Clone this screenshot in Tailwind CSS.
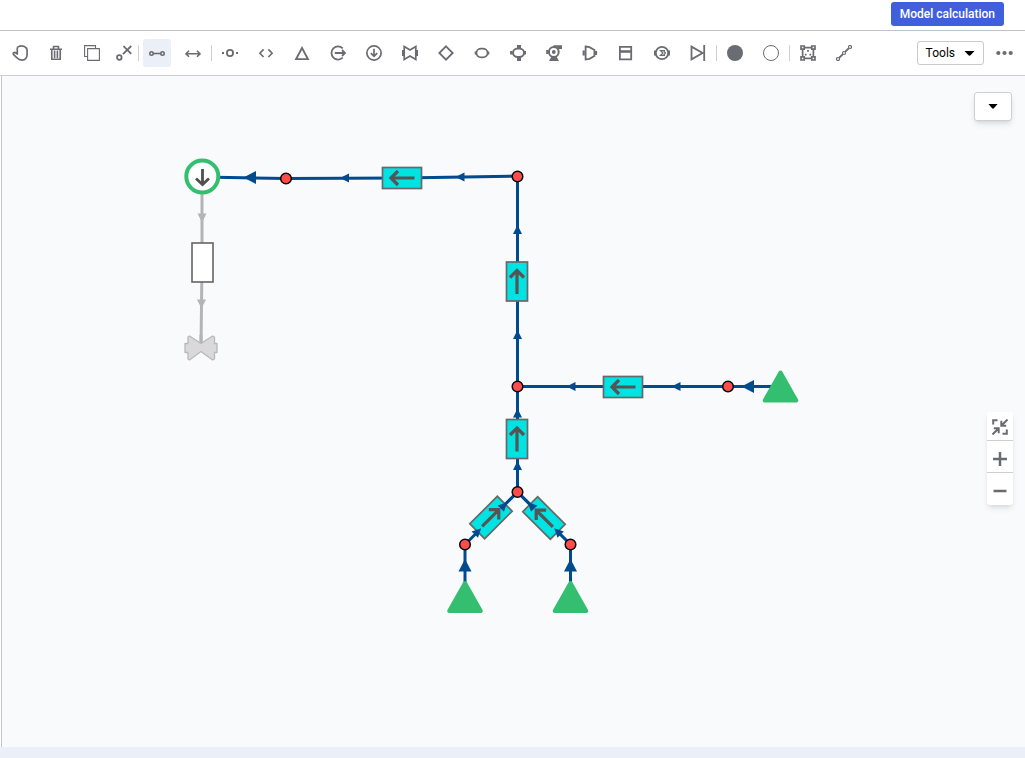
<!DOCTYPE html>
<html lang="en">
<head>
  <meta charset="UTF-8">
  <meta name="viewport" content="width=device-width, initial-scale=1.0">
  <title>Model editor</title>
  <script src="https://cdn.jsdelivr.net/npm/@tailwindcss/browser@4"></script>
</head>
<body class="flex h-screen flex-col overflow-hidden bg-white font-['Roboto',sans-serif] text-[#6b6b72]">
  <header class="flex shrink-0 justify-end border-b border-[#c0c0ca] pt-0.5 pr-[21px] pb-1">
    <button type="button" class="h-6 rounded-[3px] bg-[#3f5fdd] px-[9px] text-xs font-medium text-white">Model calculation</button>
  </header>

  <div role="toolbar" aria-label="Drawing tools" class="flex h-[45px] shrink-0 items-center border-b border-[#ceced2] pl-1.5">
    <div class="flex items-center gap-2">
      <button type="button" aria-label="Pan" class="grid size-7 place-items-center">
        <svg class="size-4" viewBox="0 0 16 16" fill="none" stroke="currentColor" stroke-width="1.7" stroke-linejoin="round" stroke-linecap="round"><path d="M5.3 9V3Q5.3 1.6 7 1.5Q8.7.6 10.3 1.2Q12.5 1 13.4 2.4Q15 3 15.1 5V9.8Q14.8 14.9 10 15.1Q7 15 5 12.8L1.4 9.4Q.8 7.6 2.6 7.3Q4 7.4 5.3 9"/></svg>
      </button>
      <button type="button" aria-label="Delete" class="grid size-7 place-items-center">
        <svg class="size-4" viewBox="0 0 16 16" fill="none" stroke="currentColor" stroke-width="1.6"><path d="M2 4.3H14M5.5 4V1.5H10.5V4M3.8 4V14.2H12.2V4M6.6 5.5V13M9.4 5.5V13"/></svg>
      </button>
      <button type="button" aria-label="Copy" class="grid size-7 place-items-center">
        <svg class="size-4" viewBox="0 0 16 16" fill="none" stroke="currentColor" stroke-width="1.1"><path d="M3.5 11.5H.6V.6H11.5V3.5M3.6 3.6H15.4V15.4H3.6Z"/></svg>
      </button>
    </div>
    <button type="button" aria-label="Disconnect" class="ml-1 grid size-7 place-items-center">
      <svg class="size-4" viewBox="0 0 16 16" fill="none" stroke="currentColor" stroke-width="1.8"><circle cx="3.3" cy="12.5" r="2.3"/><path d="M15.2 1L7 9.2M7.5 1.2L15.2 8.8"/></svg>
    </button>
    <div class="mr-1 h-4 w-px bg-[#cfcfd4]"></div>
    <div class="flex items-center gap-2">
      <button type="button" aria-label="Pipe" aria-pressed="true" class="grid size-7 place-items-center rounded-[3px] bg-[#ebeff7]">
        <svg class="size-4" viewBox="0 0 16 16" fill="none" stroke="currentColor" stroke-width="1.6"><circle cx="2.5" cy="8.5" r="1.7"/><circle cx="13.5" cy="8.5" r="1.7"/><path d="M4 8.5H12"/></svg>
      </button>
      <button type="button" aria-label="Two-way link" class="grid size-7 place-items-center">
        <svg class="size-4" viewBox="0 0 16 16" fill="none" stroke="currentColor" stroke-width="1.6"><path d="M1 8.8H15M4 5.8L1 8.8L4 11.8M12 5.8L15 8.8L12 11.8"/></svg>
      </button>
    </div>
    <div class="mx-1 h-4 w-px bg-[#cfcfd4]"></div>
    <div class="flex items-center gap-2">
      <button type="button" aria-label="Node" class="grid size-7 place-items-center">
        <svg class="size-4" viewBox="0 0 16 16" fill="none" stroke="currentColor" stroke-width="1.8"><circle cx="8" cy="8" r="3.1"/><path d="M0 8H2M14 8H16"/></svg>
      </button>
      <button type="button" aria-label="Code" class="grid size-7 place-items-center">
        <svg class="size-4" viewBox="0 0 16 16" fill="none" stroke="currentColor" stroke-width="1.6"><path d="M5.6 4.4L1.9 8.2L5.6 12M10.4 4.4L14.1 8.2L10.4 12"/></svg>
      </button>
      <button type="button" aria-label="Source" class="grid size-7 place-items-center">
        <svg class="size-4" viewBox="0 0 16 16" fill="none" stroke="currentColor" stroke-width="1.8"><path d="M8 3L14 14.2H2Z"/></svg>
      </button>
      <button type="button" aria-label="Outlet" class="grid size-7 place-items-center">
        <svg class="size-4" viewBox="0 0 16 16" fill="none" stroke="currentColor" stroke-width="1.8"><path d="M12.7 3.3A6.6 6.6 0 1 0 12.7 12.7M4.8 8H15M12 5L15 8L12 11"/></svg>
      </button>
      <button type="button" aria-label="Sink" class="grid size-7 place-items-center">
        <svg class="size-4" viewBox="0 0 16 16" fill="none" stroke="currentColor" stroke-width="1.7"><circle cx="8" cy="8" r="7.1"/><path d="M8 3.8V11.3M4.8 8.2L8 11.4L11.2 8.2"/></svg>
      </button>
      <button type="button" aria-label="Valve" class="grid size-7 place-items-center">
        <svg class="size-4" viewBox="0 0 16 16" fill="none" stroke="currentColor" stroke-width="1.7"><path d="M2.2 1.6L8 5L13.8 1.6V14.4L8 11L2.2 14.4Z"/><path d="M1 5V11M15 5V11" stroke-width="2"/></svg>
      </button>
      <button type="button" aria-label="Choke" class="grid size-7 place-items-center">
        <svg class="size-4" viewBox="0 0 16 16" fill="none" stroke="currentColor" stroke-width="1.8"><path d="M8 1.3L14.7 8L8 14.7L1.3 8Z"/></svg>
      </button>
      <button type="button" aria-label="Tank" class="grid size-7 place-items-center">
        <svg class="size-4" viewBox="0 0 16 16" fill="none" stroke="currentColor" stroke-width="1.8"><rect x="2.4" y="3.7" width="11.2" height="8.6" rx="4.8" ry="4.3"/><path d="M1.4 6.5V9.5M14.6 6.5V9.5" stroke-width="1.4"/></svg>
      </button>
      <button type="button" aria-label="Separator" class="grid size-7 place-items-center">
        <svg class="size-4" viewBox="0 0 16 16" fill="none" stroke="currentColor" stroke-width="2"><rect x="3" y="3.4" width="11" height="8.6" rx="4.8" ry="4.3"/><path d="M1.2 6V9.6M15.1 6V9.600" stroke-width="2.2"/><path d="M9 0V3M9 12V16" stroke-width="4"/></svg>
      </button>
      <button type="button" aria-label="Pump" class="grid size-7 place-items-center">
        <svg class="size-4" viewBox="0 0 16 16" fill="none" stroke="currentColor" stroke-width="2"><circle cx="7.8" cy="7" r="4.9"/><circle cx="7.800" cy="7" r="1.9" fill="currentColor" stroke="none"/><path d="M7.5 1.200H16M1.200 5V9"/><path d="M11 1H16V4H12Z" fill="currentColor" stroke="none"/><path d="M5.500 11.500H10.500L13 16H3Z" fill="currentColor" stroke="none"/></svg>
      </button>
      <button type="button" aria-label="Compressor" class="grid size-7 place-items-center">
        <svg class="size-4" viewBox="0 0 16 16" fill="none" stroke="currentColor" stroke-width="1.8"><path d="M3.600 1.500L7.500 2.200L12.400 5V11L7.500 13.800L3.600 14.500Z"/><path d="M1.700 5.500V10.500M14 6V10" stroke-width="2.200"/></svg>
      </button>
      <button type="button" aria-label="Column" class="grid size-7 place-items-center">
        <svg class="size-4" viewBox="0 0 16 16" fill="none" stroke="currentColor" stroke-width="1.8"><path d="M1.900 1.900H13.200V14.400H1.900Z"/><path d="M2 6.500H13" stroke-width="2.600"/></svg>
      </button>
      <button type="button" aria-label="Heat exchanger" class="grid size-7 place-items-center">
        <svg class="size-4" viewBox="0 0 16 16" fill="none" stroke="currentColor" stroke-width="1.8"><circle cx="8" cy="8" r="6.200"/><path d="M1 5.500V10.500M15 5.500V10.500" stroke-width="2"/><path d="M11 5.600H6.500L9 8L6.500 10.400H11M9.500 5.600L11.500 8L9.500 10.400" stroke-width="1.200"/></svg>
      </button>
      <button type="button" aria-label="Check valve" class="grid size-7 place-items-center">
        <svg class="size-4" viewBox="0 0 16 16" fill="none" stroke="currentColor" stroke-width="1.800"><path d="M1.500 1.600L12.600 8L1.500 14.400ZM14.200 0V16"/></svg>
      </button>
    </div>
    <div class="mx-1 h-4 w-px bg-[#cfcfd4]"></div>
    <div class="flex items-center gap-2">
      <button type="button" aria-label="Filled joint" class="grid size-7 place-items-center">
        <svg class="size-4" viewBox="0 0 16 16" fill="currentColor"><circle cx="8" cy="8" r="8"/></svg>
      </button>
      <button type="button" aria-label="Open joint" class="grid size-7 place-items-center">
        <svg class="size-4" viewBox="0 0 16 16" fill="none" stroke="currentColor" stroke-width="1"><circle cx="8" cy="8" r="7.5"/></svg>
      </button>
    </div>
    <div class="mx-1 h-4 w-px bg-[#cfcfd4]"></div>
    <div class="flex items-center gap-2">
      <button type="button" aria-label="Group" class="grid size-7 place-items-center">
        <svg class="size-4" viewBox="0 0 16 16" fill="none" stroke="currentColor" stroke-width="1.7"><path d="M1 1H4.200V4.200H1ZM11.800 1H15V4.200H11.800ZM1 11.800H4.200V15H1ZM11.800 11.800H15V15H11.800ZM4.200 2.600H11.800M4.200 13.400H11.800M2.600 4.200V11.800M13.400 4.200V11.800"/><path d="M7.100 5H8.900V6.800H7.100ZM4.800 8.800H6.600V10.600H4.800ZM9.400 8.800H11.200V10.600H9.400Z" fill="currentColor" stroke="none"/></svg>
      </button>
      <button type="button" aria-label="Polyline" class="grid size-7 place-items-center">
        <svg class="size-4" viewBox="0 0 16 16" fill="none" stroke="currentColor" stroke-width="1.2"><circle cx="2" cy="14" r="1.500"/><circle cx="8" cy="8" r="1.500"/><circle cx="14" cy="2" r="1.500"/><path d="M3.100 12.900L6.900 9.100M9.100 6.900L12.900 3.100" stroke-width="2"/></svg>
      </button>
    </div>
    <div class="mr-3 ml-auto flex items-center gap-3">
      <button type="button" class="flex h-6 items-center gap-[9px] rounded-[3px] border border-[#c9c9ce] px-2 text-xs text-black">
        Tools
        <svg class="h-[5px] w-[11px]" viewBox="0 0 11 6" preserveAspectRatio="none"><path d="M.5 0H10.500L6.500 5.200Q5.500 6.200 4.500 5.200Z"/></svg>
      </button>
      <button type="button" aria-label="More">
        <svg class="h-4 w-[17px]" viewBox="0 0 17 16" fill="currentColor"><circle cx="2.300" cy="8" r="2.100"/><circle cx="8.500" cy="8" r="2.100"/><circle cx="14.700" cy="8" r="2.100"/></svg>
      </button>
    </div>
  </div>

  <main class="relative ml-px flex-1 border-l border-[#c4c6ca] bg-[#f8fafc]">
    <!-- Network diagram -->
    <svg class="absolute inset-0 size-full" role="img" aria-label="Pipe network">
      <defs>
        <!-- Every shape is drawn around 0,0; arrows and pipes point up -->
        <path id="flow" d="M0-4.5L4.5 4.5H-4.5Z"/>
        <path id="flow-big" d="M0-6.5L6.5 6H-6.5Z"/>
        <g id="pipe">
          <rect x="-10.5" y="-19.5" width="21" height="39" fill="#00e3e3" stroke="#686868" stroke-width="1.7"/>
          <path d="M0 12.5V-10.5M-7-4L0-11L7-4" fill="none" stroke="#555" stroke-width="3.2"/>
        </g>
        <circle id="joint" r="5.3" fill="#ff4d4d" stroke="#080808" stroke-width="1.5"/>
        <path id="well" d="M0-14L15.8 14H-15.8Z" fill="#34be70" stroke="#34be70" stroke-width="4" stroke-linejoin="round"/>
      </defs>
      <g transform="translate(-2 -76)">
        <path d="M202 177V262L201 348" fill="none" stroke="#b3b4b6" stroke-width="3"/>
        <path d="M202 177L286 178.5L402 178L517.5 176V492L465 544.5V598M517.5 492L570.5 544.5V598M517.5 386.5H780" fill="none" stroke="#004a90" stroke-width="3"/>

        <g fill="#b3b4b6">
          <use href="#flow" transform="translate(202 218) rotate(180)"/>
          <use href="#flow" transform="translate(201.5 304) rotate(180)"/>
        </g>
        <rect x="192" y="243" width="21" height="39" fill="#fff" stroke="#656565" stroke-width="1.6"/>
        <path d="M189.5 336L201 343.5L212.5 336L214.5 337V343.5H217V352.5H214.5V359L212.5 360L201 351.5L189.5 360L188 359V352.5H185V343.5H188V337Z" fill="#d9d9db" stroke="#b9b9bb" stroke-width="1.3" stroke-linejoin="round"/>
        <path d="M201 335V343" stroke="#b3b4b6" stroke-width="3"/>

        <use href="#pipe" transform="translate(402 178) rotate(-90)"/>
        <use href="#pipe" transform="translate(517 281.5)"/>
        <use href="#pipe" transform="translate(517 439)"/>
        <use href="#pipe" transform="translate(623 387) rotate(-90)"/>
        <use href="#pipe" transform="translate(491 517.5) rotate(45)"/>
        <use href="#pipe" transform="translate(544 518) rotate(-45)"/>

        <g fill="#004a90">
          <use href="#flow-big" transform="translate(250 177.5) rotate(-90)"/>
          <use href="#flow" transform="translate(344.5 178) rotate(-90)"/>
          <use href="#flow" transform="translate(460 177) rotate(-90)"/>
          <use href="#flow" transform="translate(517.5 229.5)"/>
          <use href="#flow" transform="translate(517.5 334.5)"/>
          <use href="#flow" transform="translate(517.5 413)"/>
          <use href="#flow" transform="translate(517.5 465.5)"/>
          <use href="#flow" transform="translate(571 386.5) rotate(-90)"/>
          <use href="#flow" transform="translate(676 386.5) rotate(-90)"/>
          <use href="#flow-big" transform="translate(748 386.5) rotate(-90)"/>
          <use href="#flow" transform="translate(478 531.5) rotate(45)"/>
          <use href="#flow" transform="translate(504 505.5) rotate(45)"/>
          <use href="#flow" transform="translate(557.5 531.5) rotate(-45)"/>
          <use href="#flow" transform="translate(531 505.5) rotate(-45)"/>
          <use href="#flow-big" transform="translate(465 565.5)"/>
          <use href="#flow-big" transform="translate(570.5 565.5)"/>
        </g>
        <path d="M503 506.5L517.5 492L532 506.5" fill="none" stroke="#004a90" stroke-width="3"/>

        <use href="#joint" x="286" y="178.5"/>
        <use href="#joint" x="517.5" y="176.5"/>
        <use href="#joint" x="517.5" y="386.5"/>
        <use href="#joint" x="728" y="386.5"/>
        <use href="#joint" x="517.5" y="492"/>
        <use href="#joint" x="465" y="544.5"/>
        <use href="#joint" x="570.5" y="544.5"/>

        <use href="#well" x="780.5" y="386.5"/>
        <use href="#well" x="465" y="597"/>
        <use href="#well" x="570.5" y="597"/>

        <circle cx="202.300" cy="176.5" r="16" fill="#fff" stroke="#34be70" stroke-width="4"/>
        <path d="M202.5 169V184M196 178.5L202.5 184.5L209 178.5" fill="none" stroke="#505050" stroke-width="2.8"/>
      </g>
    </svg>

    <button type="button" aria-label="Show panel" class="absolute top-4 right-[13px] grid h-[29px] w-[38px] place-items-center rounded-[3px] border border-[#cfd0d4] bg-white shadow-md">
      <svg class="h-[5px] w-[10px]" viewBox="0 0 11 6" preserveAspectRatio="none"><path d="M.5 0H10.5L6.5 5.2Q5.5 6.2 4.5 5.2Z"/></svg>
    </button>

    <div class="absolute top-[336px] right-3 w-[26px] divide-y divide-[#cfcfd3] rounded-[3px] bg-white shadow-md">
      <button type="button" aria-label="Fit to screen" class="grid h-[29px] w-full place-items-center pt-0.5">
        <svg class="size-4" viewBox="0 0 16 16" fill="none" stroke="currentColor" stroke-width="2"><path d="M1.200 5.500V1.200H5.500M10.500 14.800H14.800V10.500M15.500.5L9.500 6.500M9.300 1.800V6.700H14.200M.5 15.500L6.500 9.500M1.800 9.300H6.700V14.200"/></svg>
      </button>
      <button type="button" aria-label="Zoom in" class="grid h-8 w-full place-items-center pt-1">
        <svg class="size-4" viewBox="0 0 16 16" fill="none" stroke="currentColor" stroke-width="2.5"><path d="M1 8H15M8 1V15"/></svg>
      </button>
      <button type="button" aria-label="Zoom out" class="grid h-8 w-full place-items-center pt-1">
        <svg class="size-4" viewBox="0 0 16 16" fill="none" stroke="currentColor" stroke-width="2.5"><path d="M1.5 8H14.5"/></svg>
      </button>
    </div>
  </main>

  <footer class="h-[11px] shrink-0 bg-[#ebeff7]"></footer>
</body>
</html>
